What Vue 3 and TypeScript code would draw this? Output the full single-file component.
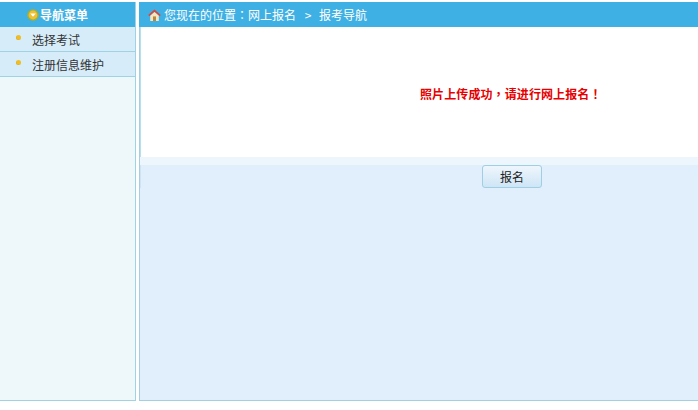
<script setup lang="ts">
const menu: string[] = ['选择考试', '注册信息维护']
</script>

<template>
  <div class="page">
    <aside class="side">
      <div class="side-head">
        <svg class="nav-ico" viewBox="0 0 12 12" width="12" height="12">
          <circle cx="6" cy="6" r="5.8" fill="#a9b02e" />
          <circle cx="6" cy="6" r="4.4" fill="#f0c034" />
          <path d="M3.2 4.6h5.6L6 7.8z" fill="#fff" />
        </svg>
        <span>导航菜单</span>
      </div>
      <ul class="menu">
        <li v-for="m in menu" :key="m" class="item">
          <span class="dot"></span>
          <span>{{ m }}</span>
        </li>
      </ul>
    </aside>
    <main class="main">
      <div class="crumb">
        <svg class="home" viewBox="0 0 13 12" width="13" height="12">
          <path d="M6.5 .4 .2 6l1.2 1.2L6.5 2.8l5.1 4.4L12.8 6z" fill="#d9463c" />
          <path d="M2.2 6.8 6.5 3l4.3 3.8V12H2.2z" fill="#f6e6c0" />
          <rect x="5" y="7.4" width="3" height="4.6" fill="#b9873d" />
        </svg>
        <span>您现在的位置<span class="punct">：</span>网上报名</span>
        <span class="sep">&gt;</span>
        <span>报考导航</span>
      </div>
      <div class="panel">
        <div class="msg">照片上传成功<span class="punct">，</span>请进行网上报名<span class="punct">！</span></div>
        <div class="band"></div>
        <div class="actions">
          <button class="btn" type="button">报名</button>
        </div>
      </div>
    </main>
  </div>
</template>

<style>
html, body { margin: 0; background: #fff; }
</style>

<style scoped>
.page {
  width: 698px;
  height: 410px;
  box-sizing: border-box;
  padding: 2px 0 9px;
  display: flex;
  gap: 3px;
  overflow: hidden;
  font-family: "Noto Sans CJK SC", "Liberation Sans", sans-serif;
  font-size: 12px;
}
.punct { font-family: "Noto Sans CJK TC", sans-serif; }
.side {
  width: 136px;
  flex: none;
  box-sizing: border-box;
  background: #eef8fb;
  border-right: 1px solid #9fd2e2;
  border-bottom: 1px solid #9fd2e2;
}
.side-head {
  height: 25px;
  background: #3fb0e3;
  color: #fff;
  font-weight: bold;
  display: flex;
  align-items: center;
  padding-left: 27px;
}
.nav-ico { margin-right: 1px; }
.menu { list-style: none; margin: 0; padding: 0; }
.item {
  height: 25px;
  box-sizing: border-box;
  background: #d6ecf9;
  border-bottom: 1px solid #9fd2e2;
  color: #333;
  display: flex;
  align-items: center;
  padding-left: 16px;
}
.dot {
  width: 5px;
  height: 5px;
  margin: -3px 11px 0 0;
  border-radius: 50%;
  background: radial-gradient(circle at 60% 40%, #f2bd1e 50%, #b98a18 100%);
}
.main {
  flex: 1;
  display: flex;
  flex-direction: column;
  min-width: 0;
}
.crumb {
  height: 25px;
  flex: none;
  background: #3fb0e3;
  color: #fff;
  display: flex;
  align-items: center;
  padding-left: 9px;
}
.home { margin-right: 3px; }
.sep { margin: 0 6px 0 7px; width: 10px; text-align: center; }
.panel {
  flex: 1;
  display: flex;
  flex-direction: column;
  background: #e1eefb;
  border-left: 1px solid #a3cfe0;
  border-bottom: 1px solid #a3cfe0;
}
.msg {
  height: 130px;
  box-sizing: border-box;
  background: #fff;
  color: #e60000;
  font-weight: bold;
  display: flex;
  align-items: center;
  padding-left: 279px;
  padding-top: 2px;
  letter-spacing: 0.1px;
  border-left: 1px solid #b5e0f0;
}
.band {
  height: 8px;
  background: #ecf6fc;
}
.actions {
  display: flex;
  padding-left: 341px;
  border-left: 1px solid #cfe4f2;
}
.btn {
  width: 60px;
  height: 23px;
  padding: 0;
  box-sizing: border-box;
  border: 1px solid #9fcfe2;
  border-radius: 3px;
  background: linear-gradient(#eef6fc, #cfe5f6);
  color: #222;
  font: inherit;
}
</style>
